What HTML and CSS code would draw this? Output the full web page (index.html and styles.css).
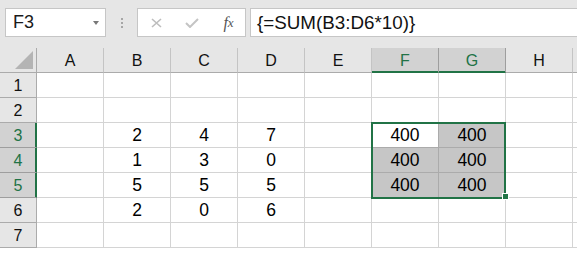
FILE: index.html
```html
<!DOCTYPE html>
<html>
<head>
<meta charset="utf-8">
<link rel="stylesheet" href="styles.css">
</head>
<body>
<div class="app">
  <div class="toolbar">
    <div class="namebox"><span class="ref">F3</span><span class="caret"></span></div>
    <div class="grip"><i></i><i></i><i></i></div>
    <div class="fbtns">
      <span class="btn"><svg width="11" height="10" viewBox="0 0 11 10"><path d="M1 1 L10 9 M10 1 L1 9" stroke="#bdbdbd" stroke-width="1.6" fill="none"/></svg></span>
      <span class="btn"><svg width="14" height="10" viewBox="0 0 14 10"><path d="M1 5 L5 9 L13 1" stroke="#c4c4c4" stroke-width="2" fill="none"/></svg></span>
      <span class="btn fx">f<span class="x">x</span></span>
    </div>
    <div class="formula">{=SUM(B3:D6*10)}</div>
  </div>
  <div class="sheet">
    <div class="corner"><svg width="37" height="24" viewBox="0 0 37 24"><polygon points="33,3 33,21 15,21" fill="#b4b4b4"/></svg></div>
    <div class="ch">A</div><div class="ch">B</div><div class="ch">C</div><div class="ch">D</div><div class="ch">E</div><div class="ch on">F</div><div class="ch on">G</div><div class="ch">H</div><div class="ch"></div>

    <div class="rh">1</div><div class="c"></div><div class="c"></div><div class="c"></div><div class="c"></div><div class="c"></div><div class="c"></div><div class="c"></div><div class="c"></div><div class="c"></div>
    <div class="rh">2</div><div class="c"></div><div class="c"></div><div class="c"></div><div class="c"></div><div class="c"></div><div class="c"></div><div class="c"></div><div class="c"></div><div class="c"></div>
    <div class="rh on">3</div><div class="c"></div><div class="c">2</div><div class="c">4</div><div class="c">7</div><div class="c"></div><div class="c in">400</div><div class="c in fill">400</div><div class="c"></div><div class="c"></div>
    <div class="rh on">4</div><div class="c"></div><div class="c">1</div><div class="c">3</div><div class="c">0</div><div class="c"></div><div class="c in fill">400</div><div class="c in fill">400</div><div class="c"></div><div class="c"></div>
    <div class="rh on">5</div><div class="c"></div><div class="c">5</div><div class="c">5</div><div class="c">5</div><div class="c"></div><div class="c in fill">400</div><div class="c in fill">400</div><div class="c"></div><div class="c"></div>
    <div class="rh">6</div><div class="c"></div><div class="c">2</div><div class="c">0</div><div class="c">6</div><div class="c"></div><div class="c"></div><div class="c"></div><div class="c"></div><div class="c"></div>
    <div class="rh">7</div><div class="c"></div><div class="c"></div><div class="c"></div><div class="c"></div><div class="c"></div><div class="c"></div><div class="c"></div><div class="c"></div><div class="c"></div>

    <div class="selection"></div>
    <div class="handle"></div>
  </div>
</div>
</body>
</html>
```

FILE: styles.css
```css
html, body {
  margin: 0;
  padding: 0;
  background: #ffffff;
  overflow: hidden;
}
.app {
  width: 577px;
  height: 254px;
  overflow: hidden;
  font-family: "Liberation Sans", Arial, sans-serif;
  color: #000;
}
.toolbar {
  display: flex;
  align-items: flex-start;
  height: 48px;
  box-sizing: border-box;
  padding-top: 8px;
  background: #e6e6e6;
}
.namebox {
  margin-left: 5px;
  width: 101px;
  height: 29px;
  box-sizing: border-box;
  border: 1px solid #c6c6c6;
  background: #fff;
  display: flex;
  align-items: center;
  padding-left: 7px;
  font-size: 18px;
}
.ref {
  line-height: 27px;
  color: #1a1a1a;
}
.caret {
  margin-left: auto;
  margin-right: 6px;
  width: 0;
  height: 0;
  border-left: 3.5px solid transparent;
  border-right: 3.5px solid transparent;
  border-top: 4px solid #787878;
}
.grip {
  width: 31px;
  height: 29px;
  display: flex;
  flex-direction: column;
  align-items: center;
  justify-content: center;
  gap: 2px;
}
.grip i {
  display: block;
  width: 2px;
  height: 2px;
  background: #a6a6a6;
}
.fbtns {
  width: 109px;
  height: 29px;
  box-sizing: border-box;
  border: 1px solid #c6c6c6;
  background: #fff;
  display: grid;
  grid-template-columns: 36px 36px 35px;
  align-items: center;
  justify-items: center;
}
.btn {
  display: flex;
  align-items: center;
  justify-content: center;
  height: 27px;
}
.fx {
  font-family: "Liberation Serif", "DejaVu Serif", serif;
  font-style: italic;
  font-size: 16px;
  color: #555;
  padding-left: 2px;
}
.fx .x {
  font-size: 13px;
}
.formula {
  margin-left: 4px;
  flex: 1;
  height: 29px;
  box-sizing: border-box;
  border: 1px solid #c6c6c6;
  border-right: none;
  background: #fff;
  padding-left: 6px;
  font-size: 18.8px;
  line-height: 27px;
  white-space: nowrap;
  color: #111;
}
.sheet {
  position: relative;
  display: grid;
  grid-template-columns: 37px repeat(8, 67px) 5px;
  grid-template-rows: repeat(8, 25px);
}
.sheet > div {
  box-sizing: border-box;
}
.corner {
  background: #e6e6e6;
  border-right: 1px solid #ababab;
  border-bottom: 1px solid #ababab;
}
.corner svg {
  display: block;
}
.ch {
  background: #e6e6e6;
  border-right: 1px solid #c4c4c4;
  border-bottom: 1px solid #ababab;
  text-align: center;
  font-size: 16px;
  padding-top: 2px;
  line-height: 22px;
  color: #111;
}
.ch.on {
  background: #d2d2d2;
  color: #217346;
  border-right-color: #9e9e9e;
  border-bottom-color: #217346;
  box-shadow: inset 0 -1px 0 #217346;
}
.rh {
  background: #e6e6e6;
  border-right: 1px solid #ababab;
  border-bottom: 1px solid #ababab;
  text-align: center;
  font-size: 16px;
  padding-top: 1px;
  line-height: 23px;
  color: #111;
}
.rh.on {
  background: #d2d2d2;
  color: #217346;
  border-bottom-color: #9e9e9e;
  border-right-color: #217346;
  box-shadow: inset -1px 0 0 #217346;
}
.c {
  border-right: 1px solid #d4d4d4;
  border-bottom: 1px solid #d4d4d4;
  text-align: center;
  font-size: 17.5px;
  padding-top: 1px;
  line-height: 23px;
  color: #000;
}
.c.in {
  border-right-color: #ababab;
  border-bottom-color: #ababab;
}
.c.fill {
  background: #c6c6c6;
}
.selection {
  position: absolute;
  left: 371px;
  top: 74px;
  width: 135px;
  height: 77px;
  box-sizing: border-box;
  border: 2px solid #217346;
  pointer-events: none;
}
.handle {
  position: absolute;
  left: 502px;
  top: 145px;
  width: 7px;
  height: 7px;
  box-sizing: border-box;
  background: #217346;
  border: 1px solid #ffffff;
}
```
